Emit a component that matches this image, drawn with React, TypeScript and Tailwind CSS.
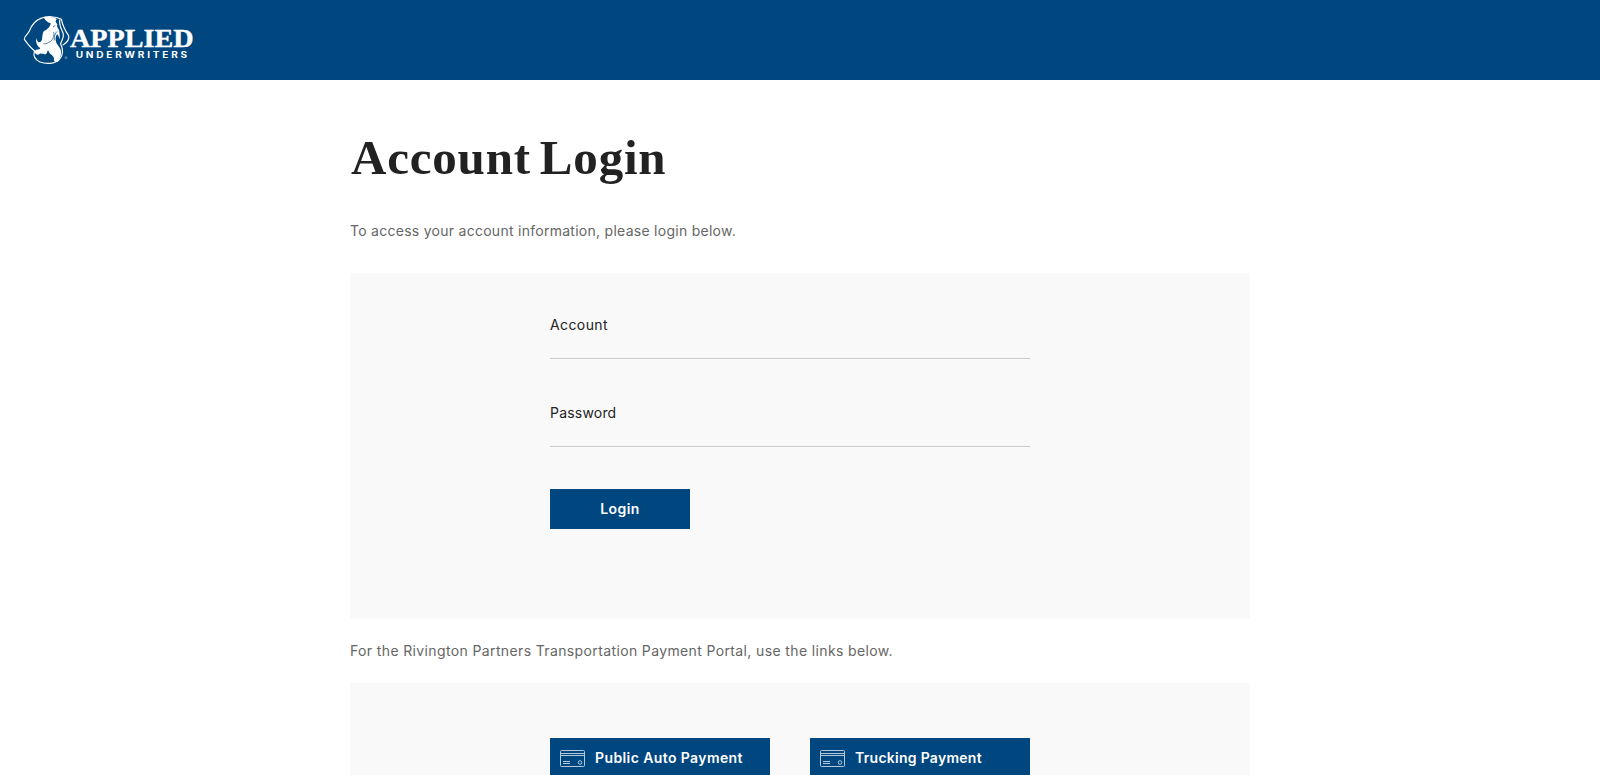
import React from "react";

const sans = "font-['Inter','Liberation_Sans',sans-serif]";

function Logo() {
  return (
    <svg className="block h-16 w-[185px]" viewBox="0 0 555 192" role="img" aria-label="Applied Underwriters">
      <g fill="none" stroke="#fff" strokeWidth="3.5" strokeLinejoin="round" strokeLinecap="round">
        <path d="M78 31 C94 24 122 24 139 34 C143 53 152 70 161 83 C164 95 154 105 144 111" />
        <path d="M78 31 C59 37 50 51 43 69 C37 81 26 86 28 94 C38 108 49 121 59 129" />
        <path d="M58 130 C54 145 62 156 75 162 C93 169 120 168 133 155 C145 141 145 124 137 108" />
        <path d="M134 36 C132 55 141 65 145 78 C147 91 139 98 137 107" />
      </g>
      <path fill="#fff" d="M86 28 C100 25 115 27 126 33 C120 37 121 43 127 49 C124 55 129 61 132 66 C134 75 135 85 134 94 C131 87 130 77 125 80 C121 88 121 96 124 104 C127 110 134 116 137 125 C141 138 135 152 128 161 C120 164 115 159 117 149 C113 143 110 139 105 137 L99 127 L94 137 C91 140 89 140 86 137 C81 139 78 135 74 137 C68 145 57 136 60 129 C65 122 70 128 76 121 C66 114 62 104 63 90 C66 100 70 104 76 102 C85 98 79 84 86 70 C98 65 106 55 107 46 C98 44 89 37 86 28Z" />
      <path fill="none" stroke="#00467f" strokeWidth="2" d="M116 72 C119 85 113 94 107 100 C99 105 91 109 85 107 M121 52 L114 57 M127 70 C120 75 117 85 118 97" />
      <circle cx="153" cy="149" r="3" fill="none" stroke="#fff" strokeWidth="1" />
      <text x="165" y="117" textLength="371" lengthAdjust="spacingAndGlyphs" fill="#fff" stroke="#fff" strokeWidth="1" fontFamily="'Liberation Serif',serif" fontWeight="700" fontSize="73">APPLIED</text>
      <text x="182" y="150" textLength="343" lengthAdjust="spacingAndGlyphs" letterSpacing="7" fill="#fff" fontFamily="Inter,sans-serif" fontWeight="700" fontSize="25">UNDERWRITERS</text>
    </svg>
  );
}

function Field({ label, type, spacing }: { label: string; type: string; spacing: string }) {
  return (
    <label className="flex h-[88px] flex-col text-[14px] leading-5 text-[#222]">
      <span className={spacing}>{label}</span>
      <input type={type} className="h-[24px] w-full border-b border-[#ccc] bg-transparent outline-none" />
    </label>
  );
}

function CardIcon() {
  return (
    <svg className="h-[17px] w-[25px]" viewBox="0 0 25 17" fill="none" stroke="#b4c8da" strokeWidth="1">
      <rect x=".5" y=".5" width="24" height="16" rx="1" />
      <path d="M0 3.5h25M0 5.5h25M3 11.5h7M3 13.5h7" />
      <circle cx="20" cy="12.5" r="1.8" />
    </svg>
  );
}

function PaymentLink({ label, spacing }: { label: string; spacing: string }) {
  return (
    <a href="#" className="flex h-10 w-[220px] items-center gap-[10px] bg-[#00467f] px-[10px] text-[14px] font-semibold text-white">
      <CardIcon />
      <span className={`${spacing} pb-[2px] whitespace-nowrap`}>{label}</span>
    </a>
  );
}

export default function App() {
  return (
    <div className={`${sans} h-[775px] overflow-hidden bg-white text-[14px]`}>
      <header className="h-20 bg-[#00467f] pt-2 pl-[15px]">
        <Logo />
      </header>
      <main className="mx-auto w-[900px]">
        <h1 className="pt-[50px] pl-px font-['Liberation_Serif',serif] text-[49px] leading-[56px] font-bold tracking-[0.8px] text-[#222] [word-spacing:-4px]">Account Login</h1>
        <p className="mt-[35px] leading-5 tracking-[0.27px] text-[#666]">To access your account information, please login below.</p>
        <form className="mt-[32px] h-[346px] bg-[#f9f9f9] pt-[42px] pl-[200px]">
          <div className="w-[480px]">
            <Field label="Account" type="text" spacing="tracking-[0.4px]" />
            <Field label="Password" type="password" spacing="tracking-[0.2px]" />
          </div>
          <button type="button" className="-mt-[2px] h-10 w-[140px] bg-[#00467f] pb-[2px] font-semibold tracking-[0.4px] text-white">Login</button>
        </form>
        <p className="pt-[22px] leading-5 tracking-[0.37px] text-[#666]">For the Rivington Partners Transportation Payment Portal, use the links below.</p>
        <section className="mt-[22px] flex h-[160px] gap-10 bg-[#f9f9f9] pt-[55px] pl-[200px]">
          <PaymentLink label="Public Auto Payment" spacing="tracking-[0.4px]" />
          <PaymentLink label="Trucking Payment" spacing="tracking-[0.27px]" />
        </section>
      </main>
    </div>
  );
}
